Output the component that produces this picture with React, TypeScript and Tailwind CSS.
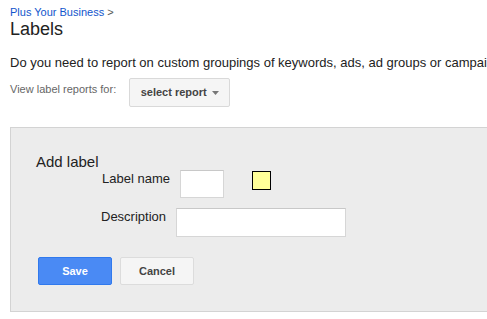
import React from "react";

const Caret = () => (
  <svg width="7" height="4" viewBox="0 0 7 4" className="ml-[5px]">
    <path d="M0 0h7L3.5 4z" fill="#777" />
  </svg>
);

const FieldRow = ({
  label,
  indent,
  gap,
  children,
}: {
  label: string;
  indent: string;
  gap: string;
  children: React.ReactNode;
}) => (
  <div className={`flex items-start ${indent}`}>
    <span className={`text-[13px] leading-[15px] pt-[1px] text-[#222] ${gap}`}>{label}</span>
    {children}
  </div>
);

export default function App() {
  return (
    <div
      className="w-[487px] h-[319px] overflow-hidden bg-white pl-[10px] pt-[6px]"
      style={{ fontFamily: '"Liberation Sans", Arial, sans-serif' }}
    >
      <div className="text-[11px] leading-[13px]">
        <a className="text-[#1155cc]">Plus Your Business</a>
        <span className="text-[#555]"> &gt;</span>
      </div>
      <h1 className="text-[18px] leading-[20px] text-[#222]">Labels</h1>

      <p className="mt-[16px] text-[13px] leading-[16px] text-[#222] whitespace-nowrap">
        Do you need to report on custom groupings of keywords, ads, ad groups or campaigns?
      </p>

      <div className="mt-[7px] flex items-start">
        <span className="mt-[5px] text-[11px] leading-[13px] text-[#666]">View label reports for:</span>
        <button className="ml-[13px] w-[101px] h-[29px] flex items-center justify-center rounded-[2px] border border-[#d9d9d9] bg-[#f5f5f5] text-[11px] font-bold text-[#444]">
          select report
          <Caret />
        </button>
      </div>

      <div className="mt-[20px] w-[500px] border border-[#d3d3d3] bg-[#ececec] pl-[25px] pt-[25px] pb-[26px]">
        <div className="text-[15px] leading-[17px] text-[#222]">Add label</div>

        <FieldRow label="Label name" indent="ml-[66px]" gap="mr-[10px]">
          <input className="w-[44px] h-[28px] bg-white border border-[#d6d6d6] border-t-[#c8c8c8] outline-none" />
          <div className="ml-[28px] mt-[1px] w-[19px] h-[19px] border border-black bg-[#ffff99]" />
        </FieldRow>

        <div className="mt-[10px]">
          <FieldRow label="Description" indent="ml-[65px]" gap="mr-[10px]">
            <input className="w-[170px] h-[29px] bg-white border border-[#d6d6d6] border-t-[#c8c8c8] outline-none" />
          </FieldRow>
        </div>

        <div className="mt-[20px] ml-[2px] flex gap-[8px]">
          <button className="w-[74px] h-[28px] rounded-[2px] border border-[#3079ed] bg-[#4a8af4] text-[11px] font-bold text-white">
            Save
          </button>
          <button className="w-[74px] h-[28px] rounded-[2px] border border-[#dcdcdc] bg-[#f5f5f5] text-[11px] font-bold text-[#444]">
            Cancel
          </button>
        </div>
      </div>
    </div>
  );
}
